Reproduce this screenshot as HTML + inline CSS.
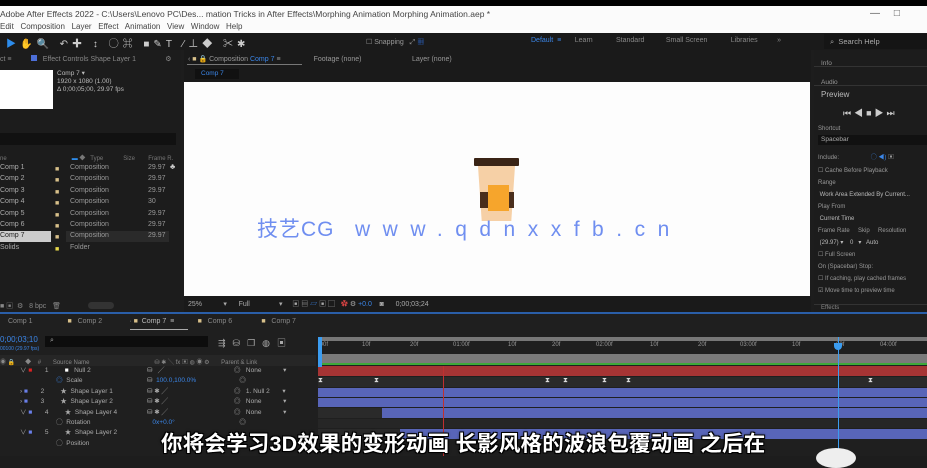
<!DOCTYPE html>
<html><head><meta charset="utf-8"><style>
*{margin:0;padding:0;box-sizing:border-box}
body{width:927px;height:456px;overflow:hidden;background:#1d1d1d;font-family:"Liberation Sans","Noto Sans CJK SC",sans-serif;position:relative;color:#9a9a9a;font-size:7px}
.a{position:absolute;white-space:nowrap}
.b{position:absolute}
</style></head><body>
<div class="b" style="left:0;top:0;width:927px;height:7px;background:#000"></div>
<div class="b" style="left:0;top:6px;width:927px;height:27px;background:#fbfbfb"></div>
<div class="a" style="left:0;top:9px;font-size:8.5px;color:#444">Adobe After Effects 2022 - C:\Users\Lenovo PC\Des... mation Tricks in After Effects\Morphing Animation Morphing Animation.aep *</div>
<div class="a" style="left:0;top:22px;font-size:8px;color:#444">Edit&nbsp;&nbsp; Composition&nbsp;&nbsp; Layer&nbsp;&nbsp; Effect&nbsp;&nbsp; Animation&nbsp;&nbsp; View&nbsp;&nbsp; Window&nbsp;&nbsp; Help</div>
<div class="a" style="left:870px;top:8px;font-size:10px;color:#555">—&nbsp;&nbsp;&nbsp;&nbsp;&nbsp;□</div>
<!-- toolbar -->
<div class="b" style="left:0;top:33px;width:927px;height:17px;background:#1a1a1a"></div>
<div class="a" style="left:6px;top:35px;font-size:10px;color:#ccc;letter-spacing:4px"><span style="color:#2d8ceb">▶</span>✋🔍 ↶✚ ↕ ◯⌘ ■✎T ⁄⊥◆ ✂✱</div>
<div class="a" style="left:366px;top:37px;font-size:7px;color:#999">☐ Snapping&nbsp;&nbsp; ⤢ <span style="color:#2d6bd6">▦</span></div>
<div class="a" style="left:531px;top:37px;font-size:7px;color:#888"><span style="color:#3b86e8">Default&nbsp; ≡</span>&nbsp;&nbsp;&nbsp;&nbsp;&nbsp;&nbsp; Learn&nbsp;&nbsp;&nbsp;&nbsp;&nbsp;&nbsp;&nbsp;&nbsp;&nbsp;&nbsp;&nbsp; Standard&nbsp;&nbsp;&nbsp;&nbsp;&nbsp;&nbsp;&nbsp;&nbsp;&nbsp;&nbsp; Small Screen&nbsp;&nbsp;&nbsp;&nbsp;&nbsp;&nbsp;&nbsp;&nbsp;&nbsp;&nbsp;&nbsp; Libraries&nbsp;&nbsp;&nbsp;&nbsp;&nbsp;&nbsp;&nbsp;&nbsp;&nbsp; »</div>
<div class="b" style="left:824px;top:34px;width:103px;height:15px;background:#151515"></div>
<div class="a" style="left:830px;top:37px;font-size:7.5px;color:#aaa">⌕&nbsp; Search Help</div>
<!-- left project panel -->
<div class="b" style="left:0;top:50px;width:181px;height:250px;background:#1c1c1c"></div>
<div class="a" style="left:0;top:55px;font-size:7px;color:#888">ct ≡&nbsp;&nbsp;&nbsp;&nbsp;&nbsp;&nbsp;&nbsp;&nbsp;&nbsp;&nbsp;<span style="display:inline-block;width:6px;height:6px;background:#4d6fd8"></span>&nbsp;&nbsp; Effect Controls Shape Layer 1&nbsp;&nbsp;&nbsp;&nbsp;&nbsp;&nbsp;&nbsp;&nbsp;&nbsp;&nbsp;&nbsp;&nbsp;&nbsp;&nbsp;&nbsp;⚙</div>
<div class="b" style="left:0;top:70px;width:53px;height:39px;background:#fff"></div>
<div class="a" style="left:57px;top:70px;font-size:6.5px;color:#bbb;line-height:8px">Comp 7 ▾<br>1920 x 1080 (1.00)<br>Δ 0;00;05;00, 29.97 fps</div>
<div class="b" style="left:0;top:133px;width:176px;height:12px;background:#111"></div>
<div class="a" style="left:0;top:153px;font-size:6px;color:#777">ne&nbsp;&nbsp;&nbsp;&nbsp;&nbsp;&nbsp;&nbsp;&nbsp;&nbsp;&nbsp;&nbsp;&nbsp;&nbsp;&nbsp;&nbsp;&nbsp;&nbsp;&nbsp;&nbsp;&nbsp;&nbsp;&nbsp;&nbsp;&nbsp;&nbsp;&nbsp;&nbsp;&nbsp;&nbsp;&nbsp;&nbsp;&nbsp;&nbsp;&nbsp;&nbsp;&nbsp;&nbsp;&nbsp;&nbsp;<span style="color:#2d8ceb">▬</span> ◆&nbsp;&nbsp; Type&nbsp;&nbsp;&nbsp;&nbsp;&nbsp;&nbsp;&nbsp;&nbsp;&nbsp;&nbsp;&nbsp;&nbsp;Size&nbsp;&nbsp;&nbsp;&nbsp;&nbsp;&nbsp;&nbsp; Frame R.</div>
<div class="b" style="left:0;top:231px;width:51px;height:11px;background:#ccc"></div>
<div class="b" style="left:66px;top:231px;width:103px;height:11px;background:#2a2a2a"></div>
<div class="a" style="left:0;top:162px;font-size:7px;color:#aaa;line-height:11.4px">Comp 1<br>Comp 2<br>Comp 3<br>Comp 4<br>Comp 5<br>Comp 6<br><span style="color:#222">Comp 7</span><br>Solids</div>
<div class="a" style="left:55px;top:164px;font-size:7px;line-height:11.4px;color:#d8c08a">■<br>■<br>■<br>■<br>■<br>■<br>■<br><span style="color:#e6d84a">■</span></div>
<div class="a" style="left:70px;top:162px;font-size:7px;color:#999;line-height:11.4px">Composition<br>Composition<br>Composition<br>Composition<br>Composition<br>Composition<br>Composition<br>Folder</div>
<div class="a" style="left:148px;top:162px;font-size:7px;color:#999;line-height:11.4px">29.97<br>29.97<br>29.97<br>30<br>29.97<br>29.97<br>29.97</div>
<div class="a" style="left:170px;top:162px;font-size:8px;color:#ccc">♣</div>
<div class="a" style="left:0;top:301px;font-size:7px;color:#888">■ ▣&nbsp; ⚙&nbsp;&nbsp; 8 bpc&nbsp;&nbsp; 🗑</div>
<div class="b" style="left:88px;top:302px;width:26px;height:7px;background:#333;border-radius:4px"></div>
<!-- comp panel -->
<div class="b" style="left:184px;top:50px;width:627px;height:32px;background:#1a1a1a"></div>
<div class="a" style="left:188px;top:55px;font-size:7px;color:#999">‹ <span style="color:#d8c08a">■</span> 🔒 Composition <span style="color:#3b86e8">Comp 7</span> ≡&nbsp;&nbsp;&nbsp;&nbsp;&nbsp;&nbsp;&nbsp;&nbsp;&nbsp;&nbsp;&nbsp;&nbsp;&nbsp;&nbsp;&nbsp;&nbsp;&nbsp;Footage (none)&nbsp;&nbsp;&nbsp;&nbsp;&nbsp;&nbsp;&nbsp;&nbsp;&nbsp;&nbsp;&nbsp;&nbsp;&nbsp;&nbsp;&nbsp;&nbsp;&nbsp;&nbsp;&nbsp;&nbsp;&nbsp;&nbsp;&nbsp;&nbsp;&nbsp;&nbsp;Layer (none)</div>
<div class="b" style="left:187px;top:64px;width:115px;height:1px;background:#777"></div>
<div class="b" style="left:195px;top:69px;width:44px;height:10px;background:#111"></div>
<div class="a" style="left:201px;top:70px;font-size:6.5px;color:#3b86e8">Comp 7</div>
<div class="b" style="left:184px;top:82px;width:626px;height:214px;background:#fdfdfd"></div>
<!-- cup -->
<div class="b" style="left:474px;top:158px;width:45px;height:8px;background:#3a2416;border-radius:1px"></div>
<div class="b" style="left:478px;top:166px;width:37px;height:55px;background:#f6d0a6;clip-path:polygon(0 0,100% 0,90% 100%,10% 100%)"></div>
<div class="b" style="left:480px;top:192px;width:34px;height:16px;background:#4a2e1c"></div>
<div class="b" style="left:488px;top:185px;width:21px;height:26px;background:#f6a52c"></div>
<div class="a" style="left:257px;top:213px;font-size:21px;color:#6f8ef0;letter-spacing:1px">技艺CG&nbsp;&nbsp;&nbsp;<span style="letter-spacing:12.5px">www.qdnxxfb.cn</span></div>
<div class="b" style="left:184px;top:296px;width:627px;height:16px;background:#1a1a1a"></div>
<div class="a" style="left:188px;top:299px;font-size:7px;color:#aaa">25%&nbsp;&nbsp;&nbsp;&nbsp;&nbsp;&nbsp;&nbsp;&nbsp;&nbsp;&nbsp;&nbsp;▾&nbsp;&nbsp;&nbsp;&nbsp;&nbsp;&nbsp;Full&nbsp;&nbsp;&nbsp;&nbsp;&nbsp;&nbsp;&nbsp;&nbsp;&nbsp;&nbsp;&nbsp;&nbsp;&nbsp;&nbsp;&nbsp;▾&nbsp;&nbsp;&nbsp;&nbsp; ▣ ▤ <span style="color:#3b86e8">▱</span> ▣ ▢&nbsp;&nbsp; <span style="color:#d44">✿</span> ⚙ <span style="color:#3b86e8">+0.0</span>&nbsp;&nbsp;&nbsp; ◙&nbsp;&nbsp;&nbsp;&nbsp;&nbsp; 0;00;03;24</div>
<!-- right panel -->
<div class="b" style="left:814px;top:50px;width:113px;height:264px;background:#1c1c1c"></div>
<div class="b" style="left:814px;top:66px;width:113px;height:1px;background:#333"></div>
<div class="b" style="left:814px;top:85px;width:113px;height:1px;background:#333"></div>
<div class="a" style="left:821px;top:54px;font-size:6.5px;color:#999;line-height:19px">Info<br>Audio</div>
<div class="a" style="left:821px;top:90px;font-size:8px;color:#bbb">Preview</div>
<div class="a" style="left:843px;top:106px;font-size:9px;color:#ccc;letter-spacing:3px">⏮◀■▶⏭</div>
<div class="a" style="left:818px;top:126px;font-size:6px;color:#999">Shortcut</div>
<div class="b" style="left:818px;top:135px;width:109px;height:10px;background:#111"></div>
<div class="a" style="left:821px;top:136px;font-size:6.5px;color:#aaa">Spacebar</div>
<div class="a" style="left:818px;top:152px;font-size:6px;color:#999">Include:&nbsp;&nbsp;&nbsp;&nbsp;&nbsp;&nbsp;&nbsp;&nbsp;&nbsp;&nbsp;&nbsp;&nbsp;&nbsp;&nbsp;&nbsp;&nbsp;&nbsp;&nbsp; <span style="color:#3b86e8">◯ ◀)</span> ▣</div>
<div class="a" style="left:818px;top:165px;font-size:6px;color:#999;line-height:12px">☐ Cache Before Playback<br>Range<br><span style="color:#bbb">&nbsp;Work Area Extended By Current...</span><br>Play From<br><span style="color:#bbb">&nbsp;Current Time</span><br>Frame Rate&nbsp;&nbsp;&nbsp;&nbsp; Skip&nbsp;&nbsp;&nbsp;&nbsp; Resolution<br><span style="color:#bbb">&nbsp;(29.97) ▾&nbsp;&nbsp;&nbsp; 0&nbsp;&nbsp; ▾&nbsp;&nbsp; Auto</span><br>☐ Full Screen<br>On (Spacebar) Stop:<br>☐ If caching, play cached frames<br>☑ Move time to preview time</div>
<div class="b" style="left:814px;top:304px;width:113px;height:1px;background:#333"></div>
<div class="a" style="left:821px;top:305px;font-size:6px;color:#888">Effects</div>
<!-- timeline -->
<div class="b" style="left:0;top:312px;width:927px;height:2px;background:#2a5ea8"></div>
<div class="b" style="left:0;top:314px;width:927px;height:142px;background:#1f1f1f"></div>
<div class="a" style="left:8px;top:318px;font-size:7px;color:#888">Comp 1&nbsp;&nbsp;&nbsp;&nbsp;&nbsp;&nbsp;&nbsp;&nbsp;&nbsp;&nbsp;&nbsp;&nbsp;&nbsp;&nbsp;&nbsp;&nbsp;&nbsp; <span style="color:#d8c08a">■</span>&nbsp;&nbsp; Comp 2&nbsp;&nbsp;&nbsp;&nbsp;&nbsp;&nbsp;&nbsp;&nbsp;&nbsp;&nbsp;&nbsp;&nbsp;&nbsp; · <span style="color:#d8c08a">■</span>&nbsp; <span style="color:#bbb">Comp 7&nbsp; ≡</span>&nbsp;&nbsp;&nbsp;&nbsp;&nbsp;&nbsp;&nbsp;&nbsp;&nbsp;&nbsp;&nbsp; <span style="color:#d8c08a">■</span>&nbsp;&nbsp; Comp 6&nbsp;&nbsp;&nbsp;&nbsp;&nbsp;&nbsp;&nbsp;&nbsp;&nbsp;&nbsp;&nbsp;&nbsp;&nbsp;&nbsp; <span style="color:#d8c08a">■</span>&nbsp;&nbsp; Comp 7</div>
<div class="b" style="left:130px;top:329px;width:58px;height:1px;background:#aaa"></div>
<div class="a" style="left:0;top:336px;font-size:8px;color:#3b86e8;line-height:8px">0;00;03;10<br><span style="font-size:5px">00100 (29.97 fps)</span></div>
<div class="b" style="left:45px;top:336px;width:163px;height:11px;background:#0d0d0d"></div>
<div class="a" style="left:50px;top:337px;font-size:7px;color:#aaa">⌕</div>
<div class="a" style="left:218px;top:336px;font-size:9px;color:#aaa;letter-spacing:7px">⇶⛁❐◍▣</div>
<div class="b" style="left:0;top:355px;width:316px;height:11px;background:#262626"></div>
<div class="a" style="left:0;top:357px;font-size:6px;color:#888">◉ 🔒&nbsp;&nbsp;&nbsp;&nbsp;&nbsp; ◆&nbsp;&nbsp;&nbsp; #&nbsp;&nbsp;&nbsp;&nbsp;&nbsp;&nbsp; Source Name&nbsp;&nbsp;&nbsp;&nbsp;&nbsp;&nbsp;&nbsp;&nbsp;&nbsp;&nbsp;&nbsp;&nbsp;&nbsp;&nbsp;&nbsp;&nbsp;&nbsp;&nbsp;&nbsp;&nbsp;&nbsp;&nbsp;&nbsp;&nbsp;&nbsp;&nbsp;&nbsp;&nbsp;&nbsp;&nbsp;&nbsp;&nbsp;&nbsp;&nbsp;&nbsp;&nbsp;&nbsp;&nbsp; ⛁ ✱ ╲ fx ▣ ◍ ◉ ⚙&nbsp;&nbsp;&nbsp;&nbsp;&nbsp;&nbsp; Parent &amp; Link</div>
<div class="a" style="left:20px;top:366px;font-size:6.5px;color:#aaa;line-height:10.4px">
∨ <span style="color:#d22">■</span>&nbsp;&nbsp;&nbsp;&nbsp;&nbsp;&nbsp; 1&nbsp;&nbsp;&nbsp;&nbsp;&nbsp;&nbsp;&nbsp;&nbsp; <span style="color:#fff">■</span>&nbsp;&nbsp; Null 2<br>
&nbsp;&nbsp;&nbsp;&nbsp;&nbsp;&nbsp;&nbsp;&nbsp;&nbsp;&nbsp;&nbsp;&nbsp;&nbsp;&nbsp;&nbsp;&nbsp;&nbsp;&nbsp;&nbsp; <span style="color:#3b86e8">◎</span>&nbsp; Scale<br>
› <span style="color:#6a7fe8">■</span>&nbsp;&nbsp;&nbsp;&nbsp;&nbsp;&nbsp; 2&nbsp;&nbsp;&nbsp;&nbsp;&nbsp;&nbsp;&nbsp;&nbsp; ★&nbsp; Shape Layer 1<br>
› <span style="color:#6a7fe8">■</span>&nbsp;&nbsp;&nbsp;&nbsp;&nbsp;&nbsp; 3&nbsp;&nbsp;&nbsp;&nbsp;&nbsp;&nbsp;&nbsp;&nbsp; ★&nbsp; Shape Layer 2<br>
∨ <span style="color:#6a7fe8">■</span>&nbsp;&nbsp;&nbsp;&nbsp;&nbsp;&nbsp; 4&nbsp;&nbsp;&nbsp;&nbsp;&nbsp;&nbsp;&nbsp;&nbsp; ★&nbsp; Shape Layer 4<br>
&nbsp;&nbsp;&nbsp;&nbsp;&nbsp;&nbsp;&nbsp;&nbsp;&nbsp;&nbsp;&nbsp;&nbsp;&nbsp;&nbsp;&nbsp;&nbsp;&nbsp;&nbsp;&nbsp; ◯&nbsp; Rotation<br>
∨ <span style="color:#6a7fe8">■</span>&nbsp;&nbsp;&nbsp;&nbsp;&nbsp;&nbsp; 5&nbsp;&nbsp;&nbsp;&nbsp;&nbsp;&nbsp;&nbsp;&nbsp; ★&nbsp; Shape Layer 2<br>
&nbsp;&nbsp;&nbsp;&nbsp;&nbsp;&nbsp;&nbsp;&nbsp;&nbsp;&nbsp;&nbsp;&nbsp;&nbsp;&nbsp;&nbsp;&nbsp;&nbsp;&nbsp;&nbsp; ◯&nbsp; Position</div>
<div class="a" style="left:147px;top:366px;font-size:6.5px;color:#aaa;line-height:10.4px">⛁&nbsp;&nbsp; ╱<br>⛁&nbsp; <span style="color:#3b86e8">100.0,100.0%</span><br>⛁ ✱ ╱<br>⛁ ✱ ╱<br>⛁ ✱ ╱<br>&nbsp;&nbsp;&nbsp;<span style="color:#3b86e8">0x+0.0°</span></div>
<div class="a" style="left:234px;top:366px;font-size:6.5px;color:#aaa;line-height:10.4px">◎&nbsp;&nbsp; None&nbsp;&nbsp;&nbsp;&nbsp;&nbsp;&nbsp;&nbsp;&nbsp;&nbsp;&nbsp;&nbsp; ▾<br>&nbsp;&nbsp;&nbsp;◎<br>◎&nbsp;&nbsp; 1. Null 2&nbsp;&nbsp;&nbsp;&nbsp;&nbsp;&nbsp; ▾<br>◎&nbsp;&nbsp; None&nbsp;&nbsp;&nbsp;&nbsp;&nbsp;&nbsp;&nbsp;&nbsp;&nbsp;&nbsp;&nbsp; ▾<br>◎&nbsp;&nbsp; None&nbsp;&nbsp;&nbsp;&nbsp;&nbsp;&nbsp;&nbsp;&nbsp;&nbsp;&nbsp;&nbsp; ▾<br>&nbsp;&nbsp;&nbsp;◎</div>
<!-- graph -->
<div class="b" style="left:318px;top:337px;width:609px;height:4px;background:#777"></div>
<div class="a" style="left:318px;top:342px;font-size:6px;color:#999;word-spacing:0">
<span class="a" style="left:0">:00f</span><span class="a" style="left:44px">10f</span><span class="a" style="left:92px">20f</span><span class="a" style="left:135px">01:00f</span><span class="a" style="left:190px">10f</span><span class="a" style="left:234px">20f</span><span class="a" style="left:278px">02:00f</span><span class="a" style="left:332px">10f</span><span class="a" style="left:380px">20f</span><span class="a" style="left:422px">03:00f</span><span class="a" style="left:474px">10f</span><span class="a" style="left:518px">20f</span><span class="a" style="left:562px">04:00f</span></div>
<div class="b" style="left:318px;top:354px;width:609px;height:9px;background:#7a7a7a"></div>
<div class="b" style="left:318px;top:363px;width:609px;height:2px;background:#3ea83a"></div>
<div class="b" style="left:318px;top:366px;width:609px;height:10px;background:#a63434"></div>
<div class="b" style="left:318px;top:377px;width:609px;height:10px;background:#2a2a2a"></div>
<div class="a" style="left:318px;top:377px;font-size:7px;color:#ddd"><span class="a" style="left:0">⧗</span><span class="a" style="left:56px">⧗</span><span class="a" style="left:227px">⧗</span><span class="a" style="left:245px">⧗</span><span class="a" style="left:284px">⧗</span><span class="a" style="left:308px">⧗</span><span class="a" style="left:550px">⧗</span></div>
<div class="b" style="left:318px;top:388px;width:609px;height:9px;background:#5865b8"></div>
<div class="b" style="left:318px;top:398px;width:609px;height:9px;background:#5865b8"></div>
<div class="b" style="left:318px;top:408px;width:609px;height:10px;background:#2a2a2a"></div>
<div class="b" style="left:382px;top:408px;width:545px;height:10px;background:#5865b8"></div>
<div class="b" style="left:318px;top:419px;width:609px;height:9px;background:#262626"></div>
<div class="b" style="left:318px;top:429px;width:609px;height:10px;background:#2a2a2a"></div>
<div class="b" style="left:400px;top:429px;width:527px;height:10px;background:#5865b8"></div>
<div class="b" style="left:443px;top:366px;width:1px;height:90px;background:#c03030"></div>
<div class="b" style="left:838px;top:337px;width:1px;height:119px;background:#3b9cf0"></div>
<div class="b" style="left:834px;top:343px;width:8px;height:7px;background:#3b9cf0;border-radius:0 0 4px 4px"></div>
<div class="b" style="left:318px;top:337px;width:4px;height:30px;background:#3b9cf0"></div>
<!-- subtitle -->
<div class="a" style="left:161px;top:427px;font-size:21.5px;font-weight:bold;color:#fff;letter-spacing:0.2px;text-shadow:-1px -1px 0 #000,1px -1px 0 #000,-1px 1px 0 #000,1px 1px 0 #000,0 0 3px #000">你将会学习3D效果的变形动画 长影风格的波浪包覆动画 之后在</div>
<div class="b" style="left:816px;top:448px;width:40px;height:20px;background:#eee;border-radius:50%"></div>
</body></html>
